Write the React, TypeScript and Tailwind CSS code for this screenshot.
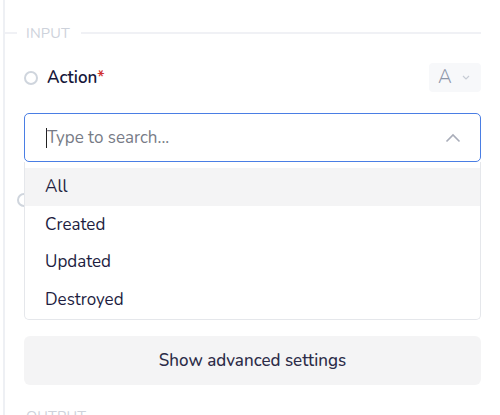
import React from "react";

export default function App() {
  const items = ["All", "Created", "Updated", "Destroyed"];
  return (
    <div
      className="w-[500px] h-[415px] overflow-hidden bg-white pl-[3px]"
      style={{ fontFamily: "Nunito, Lato, 'Noto Sans', sans-serif" }}
    >
      <div className="h-full border-l-2 border-[#eef0f4] pr-[19px] pt-[23px]">
        {/* INPUT header */}
        <div className="flex items-center h-[20px]">
          <div className="w-[12px] h-[2px] bg-[#f0f1f5]" />
          <span className="ml-[9px] mr-[11px] text-[14.5px] leading-[20px] text-[#cdd2db] tracking-[0.2px]">
            INPUT
          </span>
          <div className="flex-1 h-[2px] bg-[#f0f1f5]" />
        </div>

        <div className="pl-[19px]">
          {/* Action row */}
          <div className="mt-[20px] h-[29px] flex items-center justify-between">
            <div className="flex items-center">
              <span className="w-[14px] h-[14px] rounded-full border-2 border-[#cfd5dd]" />
              <span className="ml-[9px] text-[17px] font-semibold text-[#16163a]">
                Action<span className="text-[#d0312d]">*</span>
              </span>
            </div>
            <div className="w-[52px] h-[29px] rounded bg-[#f7f8fa] flex items-center pl-[9px]">
              <span className="text-[19px] font-light text-[#8d96a8] leading-none">A</span>
              <svg width="8" height="5" viewBox="0 0 8 5" className="ml-[10px]">
                <path d="M1 1l3 3 3-3" fill="none" stroke="#c7ccd5" strokeWidth="1.2" />
              </svg>
            </div>
          </div>

          {/* Search input */}
          <div className="mt-[21px] h-[49px] rounded-[5px] border-[1.5px] border-[#4a7ee4] flex items-center pl-[21px] pr-[19px]">
            <span className="w-px h-[20px] bg-[#222]" />
            <span className="flex-1 text-[17px] text-[#777b86]">Type to search...</span>
            <svg width="16" height="10" viewBox="0 0 16 10">
              <path d="M1.5 8.5L8 2l6.5 6.5" fill="none" stroke="#a9adb9" strokeWidth="1.6" />
            </svg>
          </div>

          {/* Dropdown */}
          <div className="relative">
            <span className="absolute left-[-7px] top-[31px] w-[14px] h-[14px] rounded-full border-2 border-[#cfd5dd]" />
            <div className="relative bg-white border border-t-0 border-[#e5e7eb] rounded-b-[5px] pt-[6px] pb-[1px]">
              {items.map((it, i) => (
                <div
                  key={it}
                  className={`h-[37.5px] flex items-center pl-[20px] text-[17px] text-[#1d1d3f] ${
                    i === 0 ? "bg-[#f4f4f5]" : ""
                  }`}
                >
                  {it}
                </div>
              ))}
            </div>
          </div>

          {/* Button */}
          <div className="mt-[16px] h-[49px] rounded-[6px] bg-[#f4f4f5] flex items-center justify-center text-[17px] font-medium text-[#2c2c48]">
            Show advanced settings
          </div>
        </div>

        {/* OUTPUT header */}
        <div className="flex items-center h-[20px] mt-[21px]">
          <div className="w-[12px] h-[2px] bg-[#f0f1f5]" />
          <span className="ml-[9px] mr-[11px] text-[14.5px] leading-[20px] text-[#cdd2db] tracking-[0.2px]">
            OUTPUT
          </span>
          <div className="flex-1 h-[2px] bg-[#f0f1f5]" />
        </div>
      </div>
    </div>
  );
}
